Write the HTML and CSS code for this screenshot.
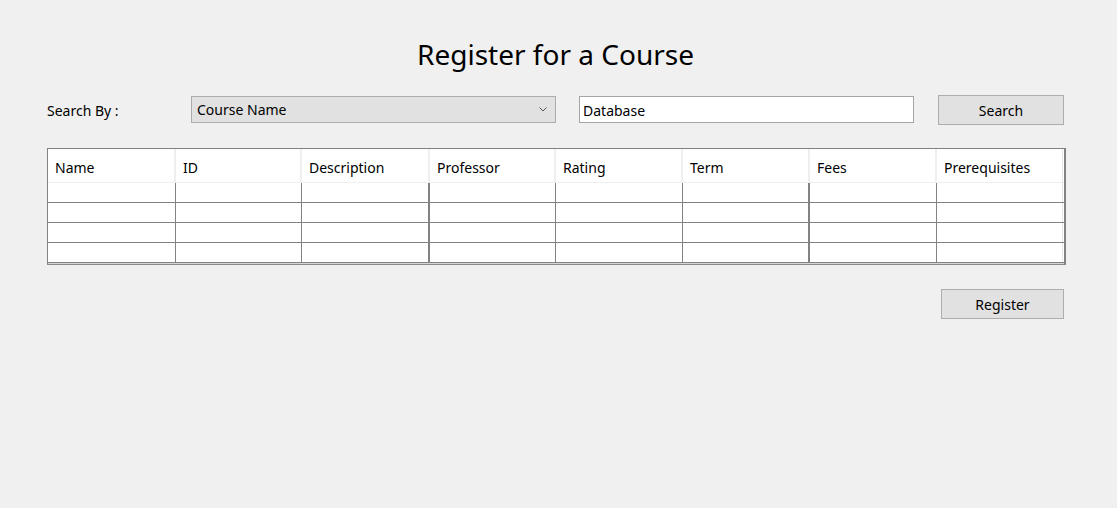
FILE: index.html
```html
<!DOCTYPE html>
<html>
<head>
<meta charset="utf-8">
<link rel="stylesheet" href="styles.css">
</head>
<body>
<div class="page">
  <h1 class="title">Register for a Course</h1>
  <div class="search-row">
    <div class="label">Search By :</div>
    <div class="combo"><span>Course Name</span>
      <svg class="chev" width="8" height="5" viewBox="0 0 8 5"><path d="M0.5 0.5 L4 4 L7.5 0.5" fill="none" stroke="#555" stroke-width="1"/></svg>
    </div>
    <div class="textbox">Database</div>
    <div class="btn search-btn">Search</div>
  </div>
  <div class="grid">
    <div class="hrow">
      <div class="hc w128">Name</div>
      <div class="hc w126">ID</div>
      <div class="hc w128">Description</div>
      <div class="hc w126">Professor</div>
      <div class="hc w127">Rating</div>
      <div class="hc w127">Term</div>
      <div class="hc w127">Fees</div>
      <div class="hc w126 last">Prerequisites</div>
    </div>
    <div class="row">
      <div class="c w128"></div><div class="c w126"></div><div class="c w128 thick"></div><div class="c w126"></div><div class="c w127"></div><div class="c w127 thick"></div><div class="c w127"></div><div class="c w126 last"></div>
    </div>
    <div class="row">
      <div class="c w128"></div><div class="c w126"></div><div class="c w128 thick"></div><div class="c w126"></div><div class="c w127"></div><div class="c w127 thick"></div><div class="c w127"></div><div class="c w126 last"></div>
    </div>
    <div class="row">
      <div class="c w128"></div><div class="c w126"></div><div class="c w128 thick"></div><div class="c w126"></div><div class="c w127"></div><div class="c w127 thick"></div><div class="c w127"></div><div class="c w126 last"></div>
    </div>
    <div class="row">
      <div class="c w128"></div><div class="c w126"></div><div class="c w128 thick"></div><div class="c w126"></div><div class="c w127"></div><div class="c w127 thick"></div><div class="c w127"></div><div class="c w126 last"></div>
    </div>
  </div>
  <div class="actions">
    <div class="btn register-btn">Register</div>
  </div>
</div>
</body>
</html>
```

FILE: styles.css
```css
html, body {
  margin: 0;
  padding: 0;
  background: #f0f0f0;
}
body {
  font-family: "Noto Sans", "Open Sans", sans-serif;
  font-size: 14px;
  color: #000;
}
.page {
  width: 1017px;
  padding: 0 0 0 47px;
}
.title {
  margin: 0;
  padding-top: 35px;
  height: 95px;
  box-sizing: border-box;
  font-weight: normal;
  font-size: 28px;
  line-height: 38px;
  text-align: center;
  width: 1017px;
}
.search-row {
  display: flex;
  align-items: flex-start;
  height: 53px;
}
.label {
  width: 144px;
  margin-top: 7px;
  line-height: 18px;
}
.combo {
  width: 365px;
  height: 27px;
  margin-top: 1px;
  box-sizing: border-box;
  background: #e1e1e1;
  border: 1px solid #adadad;
  display: flex;
  align-items: center;
  justify-content: space-between;
  padding: 1px 8px 0 5px;
  line-height: 18px;
}
.chev {
  display: block;
  margin-top: -2px;
}
.textbox {
  margin-left: 23px;
  margin-top: 1px;
  width: 335px;
  height: 27px;
  box-sizing: border-box;
  background: #fff;
  border: 1px solid #a5a5a5;
  padding: 1px 3px 0 3px;
  line-height: 25px;
}
.btn {
  box-sizing: border-box;
  background: #e1e1e1;
  border: 1px solid #adadad;
  text-align: center;
  height: 30px;
  padding-top: 1px;
  line-height: 28px;
}
.search-btn {
  margin-left: 24px;
  width: 126px;
}
.grid {
  width: 1016px;
  border-top: 1px solid #828282;
  border-left: 1px solid #828282;
  border-right: 2px solid #828282;
  border-bottom: 1px solid #8a8a8a;
  padding-bottom: 1px;
  background: #d6d6d6;
}
.hrow, .row {
  display: flex;
  background: #fff;
}
.hrow {
  height: 34px;
  box-sizing: border-box;
  border-bottom: 1px solid #efefef;
}
.row {
  height: 20px;
  box-sizing: border-box;
  border-bottom: 1px solid #828282;
}
.hc {
  box-sizing: border-box;
  padding-left: 7px;
  border-right: 2px solid #efefef;
  padding-top: 4px;
  line-height: 29px;
  white-space: nowrap;
  overflow: hidden;
}
.c {
  box-sizing: border-box;
  border-right: 1px solid #828282;
}
.c.thick {
  border-right: 2px solid #828282;
}
.c.last {
  border-right: 1px solid #e8e8e8;
}
.hc.last {
  border-right: 1px solid #e8e8e8;
}
.w128 { width: 128px; }
.w127 { width: 127px; }
.w126 { width: 126px; }
.actions {
  display: flex;
  justify-content: flex-end;
  width: 1017px;
  padding-top: 24px;
}
.register-btn {
  width: 123px;
}
```
